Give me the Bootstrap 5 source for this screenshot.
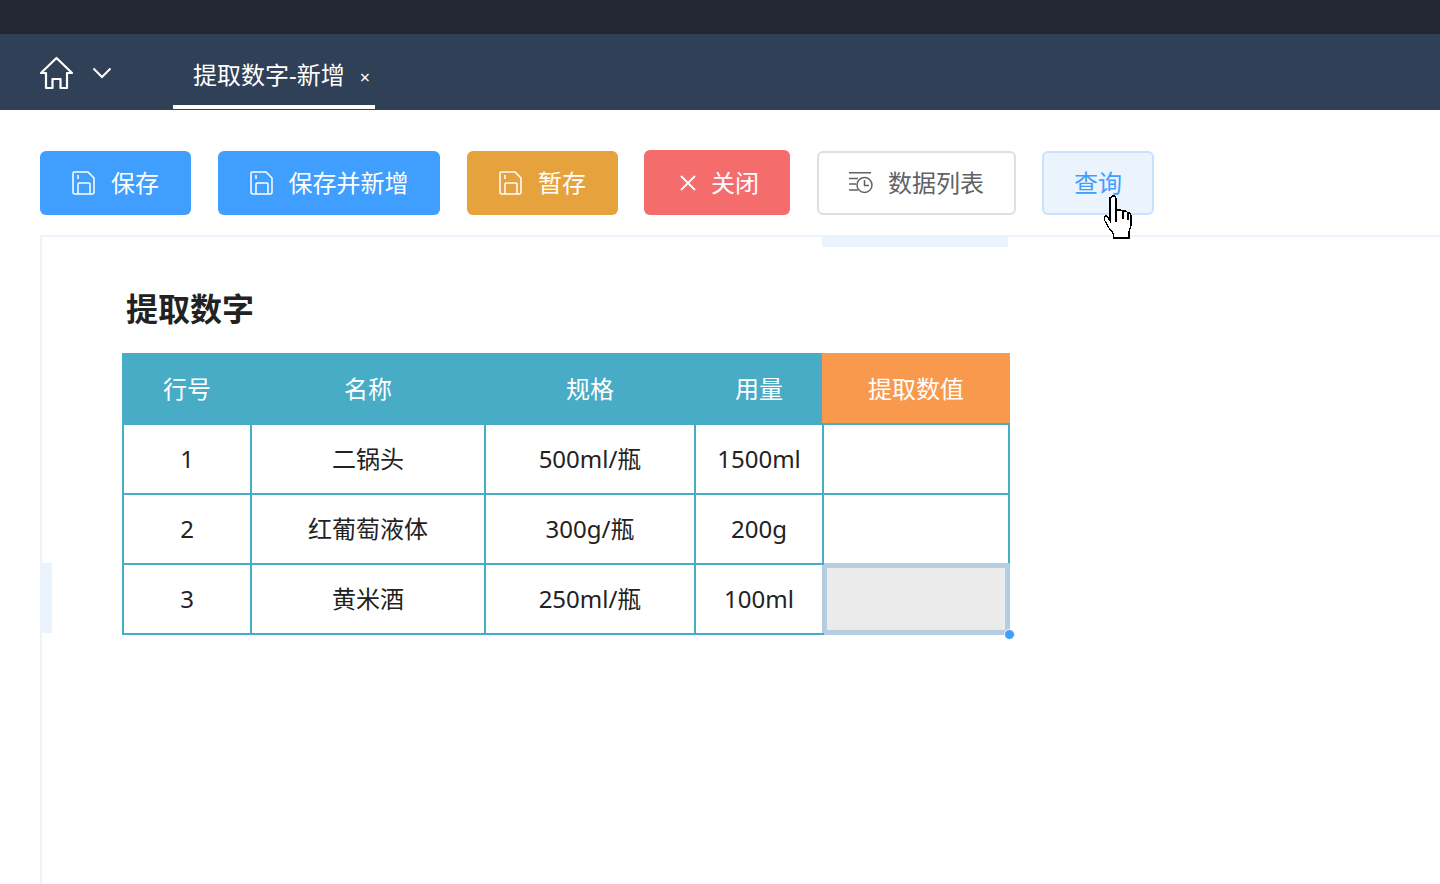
<!DOCTYPE html>
<html lang="zh-CN">
<head>
<meta charset="UTF-8">
<meta name="viewport" content="width=device-width, initial-scale=1.0">
<title>提取数字-新增</title>
<link href="https://cdn.jsdelivr.net/npm/bootstrap@5.3.0/dist/css/bootstrap.min.css" rel="stylesheet">
<style>
  html, body { height: 100%; }
  body {
    overflow: hidden;
    background: #fff;
    color: #222;
    font-family: "Noto Sans", "Noto Sans CJK SC", sans-serif;
  }
  .top-strip { height: 34px; background: #232733; }
  .tab-strip { height: 76px; background: #304057; padding-left: 40px; }
  .home-box { width: 133px; padding-top: 22px; gap: 19px; }
  .page-tab {
    width: 202px;
    height: 75px;
    margin-bottom: 1px;
    padding: 9px 0 0 20px;
    color: #fff;
    font-size: 24px;
    line-height: 63px;
    border-bottom: 4px solid #fff;
    white-space: nowrap;
  }
  .tab-close { font-size: 18px; margin-left: 15px; line-height: 1; }

  .tool-row { padding: 41px 0 0 40px; gap: 27px; height: 105px; }
  .tool-btn {
    height: 64px;
    padding: 0;
    gap: 15px;
    font-size: 24px;
    line-height: 1;
    color: #fff;
    border: 0;
    border-radius: 6px;
    white-space: nowrap;
  }
  .tool-btn:hover, .tool-btn:focus { color: #fff; }
  .btn-save-one { width: 151px; }
  .btn-save-new { width: 222px; }
  .btn-save, .btn-save:hover { background: #409eff; }
  .btn-draft, .btn-draft:hover { background: #e6a23c; width: 151px; }
  .btn-close-red, .btn-close-red:hover { background: #f56c6c; width: 146px; height: 65px; margin: -1px 0 0 -1px; padding-left: 36px; }
  .btn-list, .btn-list:hover { background: #fff; color: #606266; border: 2px solid #dcdfe6; width: 199px; }
  .btn-query, .btn-query:hover { background: #ebf3fc; color: #409eff; border: 2px solid #c6e2ff; width: 112px; margin-left: -1px; }
  .hand-cursor { position: absolute; left: 1103px; top: 195px; z-index: 5; }

  .sheet-panel {
    position: relative;
    margin: 20px 0 0 40px;
    height: 649px;
    padding: 50px 0 0 80px;
    border-left: 2px solid #ebf3fc;
    border-top: 2px solid #ebf3fc;
  }
  .mark-top { position: absolute; left: 780px; top: 0; width: 186px; height: 10px; background: #ebf3fc; }
  .mark-left { position: absolute; left: 0; top: 326px; width: 10px; height: 70px; background: #ebf3fc; }
  .sheet-title { font-size: 32px; font-weight: 700; line-height: 44px; margin: 0 0 22px 4px; color: #222; }

  .num-table {
    width: 886px;
    table-layout: fixed;
    border-collapse: collapse;
    font-size: 24px;
  }
  .num-table th, .num-table td {
    text-align: center;
    vertical-align: middle;
    height: 70px;
    padding: 0;
    font-weight: 400;
    border: 2px solid #48acc6;
  }
  .num-table th { background: #48acc6; color: #fff; border-color: #48acc6; }
  .num-table th.col-before-value { border-right-color: #f9994e; }
  .num-table th.col-value { background: #f9994e; border-color: #f9994e; border-bottom-color: #48acc6; }
  .num-table td.cell-active { position: relative; background: #ebebeb; box-shadow: inset 0 0 0 3px #b5cde0; border-color: #b5cde0; }
  .num-table td.cell-above-active { border-bottom-color: #b5cde0; }
  .num-table td.cell-left-active { border-right-color: #b5cde0; }
  .col-a { width: 128px; }
  .col-b { width: 234px; }
  .col-c { width: 210px; }
  .col-d { width: 128px; }
  .col-e { width: 186px; }
  .fill-dot {
    position: absolute;
    right: -7px;
    bottom: -7px;
    width: 11px;
    height: 11px;
    border-radius: 50%;
    background: #409eff;
    border: 1px solid #fff;
  }
</style>
</head>
<body>

<div class="top-strip"></div>

<!-- tabs -->
<div class="tab-strip d-flex align-items-end">
  <div class="home-box d-flex align-self-start align-items-center">
    <svg width="33" height="34" viewBox="0 0 33 34" fill="none" stroke="#fff" stroke-width="2.2" stroke-linejoin="round" stroke-linecap="round">
      <path d="M1 17 16.500 2 32 17h-5v15h-6.500V23h-8v9H6V17z"/>
    </svg>
    <svg width="20" height="12" viewBox="0 0 20 12" fill="none" stroke="#fff" stroke-width="2">
      <path d="M1.500 1.500 10 10l8.500-8.500"/>
    </svg>
  </div>
  <div class="page-tab">提取数字-新增<span class="tab-close">×</span></div>
</div>

<!-- toolbar -->
<div class="tool-row d-flex align-items-start">
  <button type="button" class="btn tool-btn btn-save btn-save-one d-flex align-items-center justify-content-center">
    <svg width="24" height="24" viewBox="0 0 24 24" fill="none" stroke="#fff" stroke-width="1.500"><path d="M2 1h14l6 6v14a2 2 0 0 1-2 2H3a2 2 0 0 1-2-2V2a1 1 0 0 1 1-1z"/><path d="M6 23V13a1 1 0 0 1 1-1h10a1 1 0 0 1 1 1v10M6 4v4"/></svg>
    保存
  </button>
  <button type="button" class="btn tool-btn btn-save btn-save-new d-flex align-items-center justify-content-center">
    <svg width="24" height="24" viewBox="0 0 24 24" fill="none" stroke="#fff" stroke-width="1.500"><path d="M2 1h14l6 6v14a2 2 0 0 1-2 2H3a2 2 0 0 1-2-2V2a1 1 0 0 1 1-1z"/><path d="M6 23V13a1 1 0 0 1 1-1h10a1 1 0 0 1 1 1v10M6 4v4"/></svg>
    保存并新增
  </button>
  <button type="button" class="btn tool-btn btn-draft d-flex align-items-center justify-content-center">
    <svg width="24" height="24" viewBox="0 0 24 24" fill="none" stroke="#fff" stroke-width="1.500"><path d="M2 1h14l6 6v14a2 2 0 0 1-2 2H3a2 2 0 0 1-2-2V2a1 1 0 0 1 1-1z"/><path d="M6 23V13a1 1 0 0 1 1-1h10a1 1 0 0 1 1 1v10M6 4v4"/></svg>
    暂存
  </button>
  <button type="button" class="btn tool-btn btn-close-red d-flex align-items-center">
    <svg width="16" height="16" viewBox="0 0 16 16" fill="none" stroke="#fff" stroke-width="1.800"><path d="M1 1l14 14M15 1 1 15"/></svg>
    关闭
  </button>
  <button type="button" class="btn tool-btn btn-list d-flex align-items-center justify-content-center">
    <svg width="24" height="22" viewBox="0 0 24 22" fill="none" stroke="#606266" stroke-width="1.500"><path d="M0 .75h22M0 6.500h9M0 12h7M0 18h9"/><circle cx="15.500" cy="13" r="7.500"/><path d="M15.500 8v5.500h4.500"/></svg>
    数据列表
  </button>
  <button type="button" class="btn tool-btn btn-query d-flex align-items-center justify-content-center">查询</button>
</div>

<!-- pointer from the screenshot -->
<svg class="hand-cursor" width="32" height="44" viewBox="0 0 32 44" shape-rendering="crispEdges">
  <path d="M8 3 9 1h3l1 2v12h5l2 1h3l2 2h2l1 2v11l-2 5v7H11l-1-5-4-5-4-7-1-3 1-2h2l3 5V3z" fill="#fff" stroke="#000" stroke-width="1.200"/>
  <path d="M13 3v24" stroke="#000" stroke-width="2.200" fill="none"/>
  <path d="M20 16v8M25 18v7" stroke="#000" stroke-width="1.200" fill="none"/>
</svg>

<!-- sheet -->
<div class="sheet-panel">
  <div class="mark-top"></div>
  <div class="mark-left"></div>
  <h1 class="sheet-title">提取数字</h1>
  <table class="num-table">
    <colgroup>
      <col class="col-a"><col class="col-b"><col class="col-c"><col class="col-d"><col class="col-e">
    </colgroup>
    <thead>
      <tr><th>行号</th><th>名称</th><th>规格</th><th class="col-before-value">用量</th><th class="col-value">提取数值</th></tr>
    </thead>
    <tbody>
      <tr><td>1</td><td>二锅头</td><td>500ml/瓶</td><td>1500ml</td><td></td></tr>
      <tr><td>2</td><td>红葡萄液体</td><td>300g/瓶</td><td>200g</td><td class="cell-above-active"></td></tr>
      <tr><td>3</td><td>黄米酒</td><td>250ml/瓶</td><td class="cell-left-active">100ml</td><td class="cell-active"><span class="fill-dot"></span></td></tr>
    </tbody>
  </table>
</div>

<script src="https://cdn.jsdelivr.net/npm/bootstrap@5.3.0/dist/js/bootstrap.bundle.min.js"></script>
</body>
</html>
